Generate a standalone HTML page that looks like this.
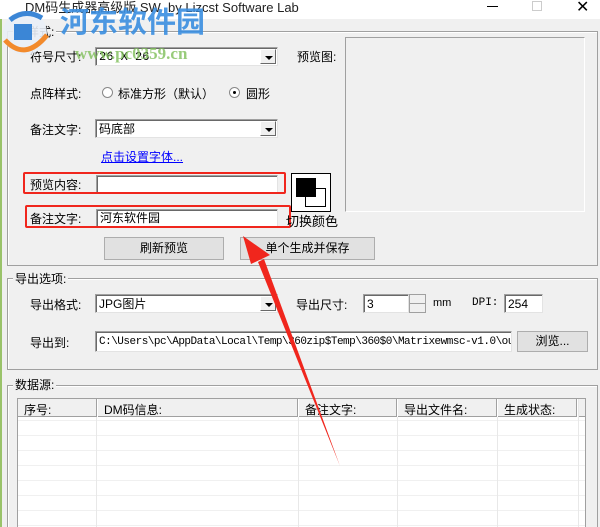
<!DOCTYPE html>
<html><head><meta charset="utf-8"><style>
*{margin:0;padding:0;box-sizing:border-box}
html,body{width:600px;height:527px;overflow:hidden}
body{background:#f0f0f0;position:relative;font-family:"Liberation Sans","Noto Sans CJK SC",sans-serif;font-size:12px;color:#000}
.a{position:absolute;white-space:nowrap}
.grp{position:absolute;border:1px solid #a0a0a0;box-shadow:inset 1px 1px #fff}
.lbl{position:absolute;background:#f0f0f0;padding:0 2px;font-size:12px}
.in{position:absolute;background:#fff;border:1px solid #a0a0a0;border-right-color:#e3e3e3;border-bottom-color:#e3e3e3;box-shadow:inset 1px 1px #696969;font-size:12px;line-height:18px;padding-left:3px;overflow:hidden;white-space:nowrap}
.dd{position:absolute;right:1px;top:1px;bottom:1px;width:16px;background:#f0f0f0;border:1px solid;border-color:#fff #696969 #696969 #fff}
.dd:after{content:"";position:absolute;left:4px;top:6px;border:4px solid transparent;border-top:4px solid #000;border-bottom:0}
.btn{position:absolute;background:#e1e1e1;border:1px solid #adadad;text-align:center;font-size:12px;line-height:21px}
.red{position:absolute;border:2px solid #f0261d;border-radius:2px}
.mono{font-family:"Liberation Mono","Noto Sans CJK SC",monospace}
</style></head><body>
<div class="a" style="left:0;top:0;width:600px;height:19px;background:#fff"></div>
<div class="a" style="left:0;top:19px;width:2px;height:508px;background:#9ac36a"></div>
<div class="a" style="left:25px;top:1px;font-size:13px;color:#222;line-height:14px">DM码生成器高级版 SW &nbsp;by Lizcst Software Lab</div>
<div class="a" style="left:487px;top:6px;width:11px;height:1px;background:#000"></div>
<div class="a" style="left:532px;top:1px;width:10px;height:10px;border:1px solid #ccc"></div>
<div class="a" style="left:576px;top:-3px;font-size:16px">✕</div>

<div class="grp" style="left:7px;top:31px;width:591px;height:235px"></div>
<div class="lbl" style="left:13px;top:23px">码样式:</div>
<div class="a" style="left:30px;top:48px">符号尺寸:</div>
<div class="in mono" style="left:95px;top:47px;width:183px;height:19px">26 X 26<div class="dd"></div></div>
<div class="a" style="left:297px;top:48px">预览图:</div>
<div class="a" style="left:345px;top:37px;width:240px;height:175px;border:1px solid #a0a0a0;border-right-color:#fff;border-bottom-color:#fff"></div>
<div class="a" style="left:30px;top:85px">点阵样式:</div>
<div class="a" style="left:102px;top:87px;width:11px;height:11px;border-radius:50%;border:1px solid #888;background:#fff"></div>
<div class="a" style="left:118px;top:85px">标准方形（默认）</div>
<div class="a" style="left:229px;top:87px;width:11px;height:11px;border-radius:50%;border:1px solid #888;background:#fff"><div style="position:absolute;left:3px;top:3px;width:3px;height:3px;border-radius:50%;background:#000"></div></div>
<div class="a" style="left:246px;top:85px">圆形</div>
<div class="a" style="left:30px;top:121px">备注文字:</div>
<div class="in" style="left:95px;top:119px;width:183px;height:19px">码底部<div class="dd"></div></div>
<div class="a" style="left:101px;top:148px;color:#0000ff;text-decoration:underline">点击设置字体...</div>
<div class="a" style="left:30px;top:176px">预览内容:</div>
<div class="in" style="left:96px;top:175px;width:182px;height:18px"></div>
<div class="red" style="left:23px;top:172px;width:263px;height:22px"></div>
<div class="a" style="left:291px;top:173px;width:40px;height:39px;border:1px solid #000;background:#fff"></div>
<div class="a" style="left:305px;top:188px;width:21px;height:19px;border:1px solid #000;background:#fff"></div>
<div class="a" style="left:296px;top:178px;width:20px;height:19px;background:#000"></div>
<div class="a" style="left:30px;top:210px">备注文字:</div>
<div class="in" style="left:96px;top:209px;width:182px;height:18px;line-height:17px">河东软件园</div>
<div class="red" style="left:25px;top:205px;width:266px;height:23px"></div>
<div class="a" style="left:286px;top:211px;font-size:13px">切换颜色</div>
<div class="btn" style="left:104px;top:237px;width:120px;height:23px">刷新预览</div>
<div class="btn" style="left:240px;top:237px;width:135px;height:23px">单个生成并保存</div>

<div class="grp" style="left:7px;top:278px;width:591px;height:92px"></div>
<div class="lbl" style="left:13px;top:270px">导出选项:</div>
<div class="a" style="left:30px;top:296px">导出格式:</div>
<div class="in" style="left:95px;top:294px;width:183px;height:19px">JPG图片<div class="dd"></div></div>
<div class="a" style="left:296px;top:296px">导出尺寸:</div>
<div class="in" style="left:363px;top:294px;width:46px;height:19px">3</div>
<div class="a" style="left:409px;top:294px;width:17px;height:19px;background:#f0f0f0;border:1px solid #a0a0a0"><div style="position:absolute;left:0;top:8px;width:15px;height:1px;background:#a0a0a0"></div></div>
<div class="a" style="left:433px;top:297px;font-size:11px">mm</div>
<div class="a mono" style="left:472px;top:297px;font-size:11px">DPI:</div>
<div class="in" style="left:504px;top:294px;width:39px;height:19px">254</div>
<div class="a" style="left:30px;top:334px">导出到:</div>
<div class="in mono" style="left:95px;top:331px;width:417px;height:21px;font-size:11px;line-height:20px;letter-spacing:-0.5px">C:\Users\pc\AppData\Local\Temp\360zip$Temp\360$0\Matrixewmsc-v1.0\out</div>
<div class="btn" style="left:517px;top:331px;width:71px;height:21px;line-height:19px">浏览...</div>

<div class="grp" style="left:7px;top:385px;width:591px;height:150px"></div>
<div class="lbl" style="left:13px;top:376px">数据源:</div>
<div class="a" style="left:17px;top:398px;width:569px;height:140px;background:#fff;border:1px solid #a0a0a0;
background-image:linear-gradient(#f0f0f0 1px,transparent 1px);background-size:100% 15px;background-position:0 21px"></div>
<div class="a" style="left:18px;top:399px;width:567px;height:18px;background:#f0f0f0;border-bottom:1px solid #a0a0a0"></div>
<div class="a" style="left:96px;top:399px;width:1px;height:130px;background:#e8e8e8"></div>
<div class="a" style="left:298px;top:399px;width:1px;height:130px;background:#e8e8e8"></div>
<div class="a" style="left:397px;top:399px;width:1px;height:130px;background:#e8e8e8"></div>
<div class="a" style="left:497px;top:399px;width:1px;height:130px;background:#e8e8e8"></div>
<div class="a" style="left:578px;top:399px;width:1px;height:130px;background:#e8e8e8"></div>
<div class="a" style="left:96px;top:399px;width:2px;height:18px;border-left:1px solid #a0a0a0;border-right:1px solid #fff"></div>
<div class="a" style="left:297px;top:399px;width:2px;height:18px;border-left:1px solid #a0a0a0;border-right:1px solid #fff"></div>
<div class="a" style="left:396px;top:399px;width:2px;height:18px;border-left:1px solid #a0a0a0;border-right:1px solid #fff"></div>
<div class="a" style="left:496px;top:399px;width:2px;height:18px;border-left:1px solid #a0a0a0;border-right:1px solid #fff"></div>
<div class="a" style="left:576px;top:399px;width:2px;height:18px;border-left:1px solid #a0a0a0;border-right:1px solid #fff"></div>
<div class="a" style="left:24px;top:401px">序号:</div>
<div class="a" style="left:104px;top:401px">DM码信息:</div>
<div class="a" style="left:305px;top:401px">备注文字:</div>
<div class="a" style="left:404px;top:401px">导出文件名:</div>
<div class="a" style="left:504px;top:401px">生成状态:</div>

<svg class="a" style="left:0;top:0" width="60" height="62"><circle cx="25" cy="33" r="22" fill="#e9eef6" opacity=".9"/><path d="M5 40 Q25 62 47 35" stroke="#f28a2c" stroke-width="5" fill="none"/><path d="M10 20 Q25 8 42 18" stroke="#3b86d6" stroke-width="5" fill="none"/><rect x="14" y="24" width="18" height="16" fill="#3b86d6"/></svg>
<div class="a" style="left:60px;top:2px;font-size:29px;font-weight:bold;color:#3a8ee0;opacity:.9;font-family:'Noto Sans CJK SC',sans-serif;line-height:36px">河东软件园</div>
<div class="a" style="left:75px;top:44px;font-size:17px;font-weight:bold;color:#7fbf5a;opacity:.8;font-family:'Liberation Serif',serif">www.pc0359.cn</div>

<svg class="a" style="left:0;top:0" width="600" height="527"><path d="M340 466 L258 262 L264 259 Z" fill="#f0261d"/><path d="M243 236 L270 255 L251 264 Z" fill="#f0261d"/></svg>
</body></html>
